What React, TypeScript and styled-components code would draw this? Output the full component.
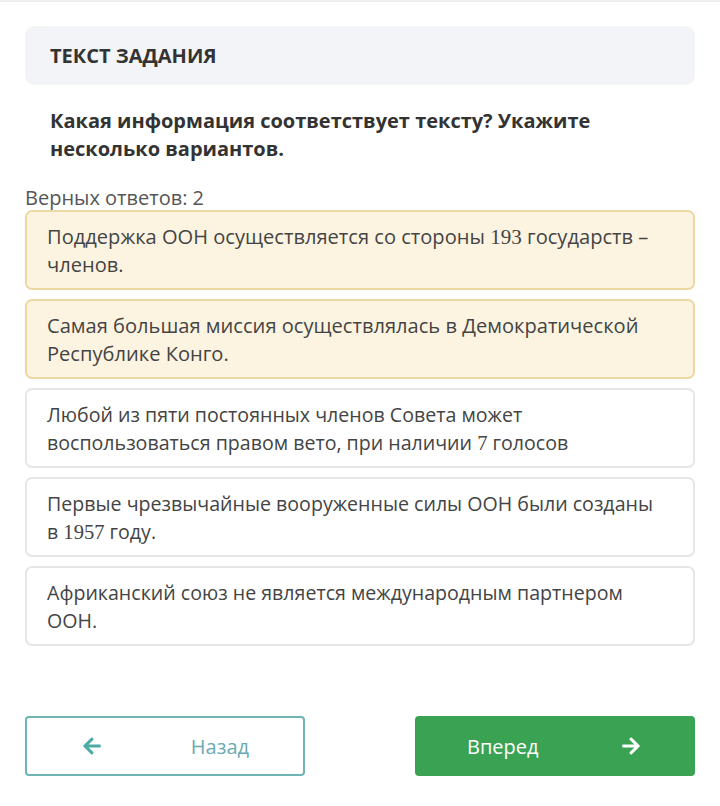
import React from 'react';
import styled, { createGlobalStyle } from 'styled-components';
import { FaArrowLeft, FaArrowRight } from 'react-icons/fa';

const GlobalStyle = createGlobalStyle`
  html, body {
    margin: 0;
    padding: 0;
    background: #ffffff;
  }
  body {
    font-family: 'Open Sans', 'Noto Sans', sans-serif;
    color: #3d3d3d;
  }
`;

interface Option {
  text: React.ReactNode;
  selected: boolean;
}

const Num: React.FC<{ children: React.ReactNode }> = ({ children }) => <StyledNum>{children}</StyledNum>;

const options: Option[] = [
  {
    text: (
      <>
        Поддержка ООН осуществляется со стороны <Num>193</Num> государств – членов.
      </>
    ),
    selected: true,
  },
  { text: 'Самая большая миссия осуществлялась в Демократической Республике Конго.', selected: true },
  {
    text: (
      <>
        Любой из пяти постоянных членов Совета может воспользоваться правом вето, при наличии <Num>7</Num> голосов
      </>
    ),
    selected: false,
  },
  {
    text: (
      <>
        Первые чрезвычайные вооруженные силы ООН были созданы в <Num>1957</Num> году.
      </>
    ),
    selected: false,
  },
  { text: 'Африканский союз не является международным партнером ООН.', selected: false },
];

export default function App() {
  return (
    <>
      <GlobalStyle />
      <StyledPage>
        <StyledTaskHeader>ТЕКСТ ЗАДАНИЯ</StyledTaskHeader>
        <StyledQuestion>Какая информация соответствует тексту? Укажите несколько вариантов.</StyledQuestion>
        <StyledCount>Верных ответов: 2</StyledCount>
        <StyledList>
          {options.map((o, i) => (
            <StyledOption key={i} selected={o.selected}>
              {o.text}
            </StyledOption>
          ))}
        </StyledList>
        <StyledNav>
          <StyledButton variant="back">
            <FaArrowLeft size={20} />
            <span>Назад</span>
          </StyledButton>
          <StyledButton variant="next">
            <span>Вперед</span>
            <FaArrowRight size={20} />
          </StyledButton>
        </StyledNav>
      </StyledPage>
    </>
  );
}

const StyledPage = styled.div`
  border-top: 2px solid #eeeef0;
  padding: 24px 25px 30px 25px;
  min-height: 806px;
  box-sizing: border-box;
`;

const StyledTaskHeader = styled.div`
  display: flex;
  align-items: center;
  height: 59px;
  padding: 0 25px;
  background: #f3f4f8;
  border-radius: 9px;
  font-size: 20px;
  font-weight: 700;
  color: #333333;
`;

const StyledQuestion = styled.div`
  margin-top: 22px;
  padding: 0 25px;
  font-size: 20px;
  line-height: 28px;
  font-weight: 700;
  color: #333333;
  max-width: 580px;
`;

const StyledCount = styled.div`
  margin-top: 22px;
  font-size: 20px;
  line-height: 26px;
  color: #555555;
`;

const StyledList = styled.div`
  display: flex;
  flex-direction: column;
  gap: 9px;
  margin-top: -1px;
`;

interface StyledOptionProps {
  selected: boolean;
}

const StyledOption = styled.div<StyledOptionProps>`
  padding: 11px 26px 9px 20px;
  border: 2px solid ${({ selected }) => (selected ? '#ead9a3' : '#e5e6e8')};
  background: ${({ selected }) => (selected ? '#fcf4e0' : '#ffffff')};
  border-radius: 7px;
  font-size: ${({ selected }) => (selected ? '20.1px' : '19.6px')};
  line-height: 28px;
  color: #444444;
`;

const StyledNum = styled.span`
  font-family: 'Liberation Serif', 'DejaVu Serif', serif;
  font-size: 1.05em;
  line-height: 1;
`;

const StyledNav = styled.div`
  display: flex;
  justify-content: space-between;
  margin-top: 70px;
`;

interface StyledButtonProps {
  variant: 'back' | 'next';
}

const StyledButton = styled.button<StyledButtonProps>`
  display: flex;
  align-items: center;
  justify-content: space-between;
  width: 280px;
  height: 60px;
  box-sizing: border-box;
  padding: ${({ variant }) => (variant === 'back' ? '0 54px 0 55px' : '0 52px 0 50px')};
  border-radius: 4px;
  border: 2px solid ${({ variant }) => (variant === 'back' ? '#6fb5b5' : '#3aa253')};
  background: ${({ variant }) => (variant === 'back' ? '#ffffff' : '#3aa253')};
  color: ${({ variant }) => (variant === 'back' ? '#6aaab2' : '#ffffff')};
  font-family: 'Open Sans', 'Noto Sans', sans-serif;
  font-size: 20px;
  svg {
    color: ${({ variant }) => (variant === 'back' ? '#4eaaa7' : '#ffffff')};
  }
`;
